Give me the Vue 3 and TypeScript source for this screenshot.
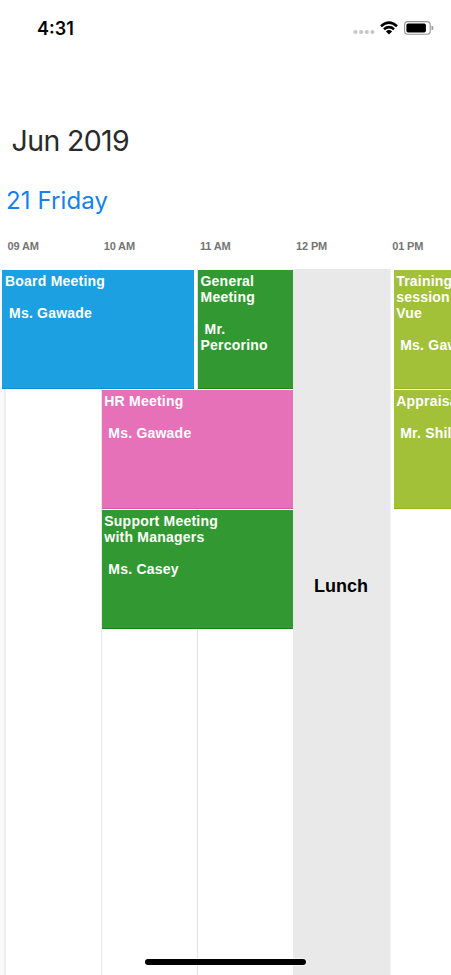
<script setup lang="ts">
interface Appointment {
  title: string[]
  person: string[]
  kind: string
}

const hours: string[] = ['09 AM', '10 AM', '11 AM', '12 PM', '01 PM']

const appointments: Appointment[] = [
  { title: ['Board Meeting'], person: ['Ms. Gawade'], kind: 'board' },
  { title: ['General', 'Meeting'], person: ['Mr.', 'Percorino'], kind: 'general' },
  { title: ['Training', 'session on', 'Vue'], person: ['Ms. Gawade'], kind: 'training' },
  { title: ['HR Meeting'], person: ['Ms. Gawade'], kind: 'hr' },
  { title: ['Appraisal'], person: ['Mr. Shilpa'], kind: 'appraisal' },
  { title: ['Support Meeting', 'with Managers'], person: ['Ms. Casey'], kind: 'support' },
]
</script>

<template>
  <main class="screen">
    <header class="status">
      <span class="clock">4:31</span>
      <span class="indicators">
        <svg class="dots" width="22" height="6" viewBox="0 0 22 6">
          <circle v-for="n in 4" :key="n" :cx="n * 5.7 - 3.3" cy="3" r="2.1" fill="#c8c8c8" />
        </svg>
        <svg class="wifi" width="18" height="14" viewBox="0 0 18 14">
          <g fill="none" stroke="#000" stroke-width="2.5">
            <path d="M1 5.2Q9-1.9 17 5.2" />
            <path d="M3.9 8.3Q9 4 14.1 8.3" />
          </g>
          <path d="M5.9 10.4Q9 7.8 12.1 10.4L9 13.5Z" />
        </svg>
        <svg class="battery" width="30" height="14" viewBox="0 0 30 14">
          <rect x=".6" y=".6" width="25.6" height="12.6" rx="3.3" fill="none" stroke="#969696" stroke-width="1.1" />
          <rect x="2.4" y="2.4" width="19.5" height="9" rx="1.7" />
          <path d="M27.5 4.5Q29.5 5.2 29.5 6.9T27.5 9.2Z" fill="#999" />
        </svg>
      </span>
    </header>
    <h1 class="month">Jun 2019</h1>
    <h2 class="day">21 Friday</h2>
    <div class="hours">
      <span v-for="hour in hours" :key="hour">{{ hour }}</span>
    </div>
    <section class="schedule">
      <div v-for="n in 5" :key="n" class="column" :class="'column-' + n"></div>
      <div class="lunch">Lunch</div>
      <article v-for="item in appointments" :key="item.kind" class="event" :class="item.kind">
        <div v-for="line in item.title" :key="line">{{ line }}</div>
        <div class="person">
          <div v-for="line in item.person" :key="line">{{ line }}</div>
        </div>
      </article>
    </section>
    <div class="home"></div>
  </main>
</template>

<style>
body {
  margin: 0;
}
</style>

<style scoped>
.screen {
  position: relative;
  width: 451px;
  height: 975px;
  overflow: hidden;
  background: #fff;
  font-family: "Liberation Sans", Arial, sans-serif;
}
.status {
  height: 56px;
  box-sizing: border-box;
  padding: 0 17px 0 37px;
  display: flex;
  align-items: center;
  justify-content: space-between;
}
.clock {
  padding-top: 1px;
  font: 600 18px/20px Inter, sans-serif;
}
.indicators {
  display: flex;
  align-items: center;
}
.dots {
  margin-top: 8px;
  margin-right: 5px;
}
.wifi {
  margin-right: 6px;
}
.month,
.day {
  margin: 0;
  white-space: nowrap;
  font-family: Inter, sans-serif;
  font-weight: 400;
}
.month {
  padding: 67px 0 0 11.5px;
  font-size: 28.5px;
  line-height: 36px;
  color: #2a2a2a;
  letter-spacing: -.62px;
}
.day {
  padding: 27px 0 0 6px;
  font-size: 24px;
  line-height: 30px;
  color: #1482e8;
  letter-spacing: .1px;
}
.hours {
  display: grid;
  grid-template-columns: repeat(5, 96.2px);
  padding: 22px 0 0 7.5px;
  height: 31px;
  font-size: 11px;
  line-height: 16px;
  font-weight: 700;
  letter-spacing: -.15px;
  color: #757575;
}
.schedule {
  height: 706px;
  display: grid;
  grid-template-columns: 96px 96px 96px 97px 96px;
  grid-template-rows: 120px 120px 120px 1fr;
  padding-left: 5px;
  box-sizing: border-box;
  width: 486px;
  background: linear-gradient(90deg, #fafafa 4px, transparent 4px);
}
.column {
  grid-row: 1 / 5;
  border-left: 1px solid #e3e3e3;
}
.column-1 { grid-column: 1; margin-left: -1px; border-left: 2px solid #eee; }
.column-2 { grid-column: 2; border-color: #e8e8e8; }
.column-3 { grid-column: 3; }
.column-4 { grid-column: 4; }
.column-5 { grid-column: 5; border-color: #f3f3f3; }
.lunch {
  grid-column: 4;
  grid-row: 1 / 5;
  background: #e9e9e9;
  display: flex;
  justify-content: center;
  padding: 306px 1px 0 0;
  font-size: 18px;
  line-height: 22px;
  font-weight: 700;
  color: #000;
}
.event {
  margin-top: 1px;
  padding: 3px;
  box-sizing: border-box;
  overflow: hidden;
  font-size: 14px;
  line-height: 16px;
  font-weight: 700;
  letter-spacing: .22px;
  white-space: nowrap;
  color: #fff;
}
.person {
  margin-top: 16px;
  text-indent: 4px;
}
.person > div + div {
  text-indent: 0;
}
.board { grid-column: 1 / 3; grid-row: 1; margin-left: -3px; margin-right: 3px; background: #1ca0e2; border-bottom: 1px solid #0f8fd5; }
.general { grid-column: 3; grid-row: 1; margin-left: 1px; padding-left: 2.5px; }
.general,
.support { background: #329932; border-bottom: 1px solid #138813; }
.hr { grid-column: 2 / 4; grid-row: 2; background: #e671b8; border-bottom: 1px solid #df54a5; }
.support { grid-column: 2 / 4; grid-row: 3; }
.hr,
.support { margin-left: .7px; padding-left: 2.6px; }
.training { grid-column: 5; grid-row: 1; }
.appraisal { grid-column: 5; grid-row: 2; }
.training,
.appraisal { margin-left: 3.6px; padding-left: 2.6px; background: #a2c139; border-bottom: 1px solid #93b520; }
.home {
  position: absolute;
  left: 145px;
  top: 959px;
  width: 161px;
  height: 6px;
  border-radius: 3px;
  background: #000;
  box-shadow: 0 0 0 1px #fff8;
}
</style>
